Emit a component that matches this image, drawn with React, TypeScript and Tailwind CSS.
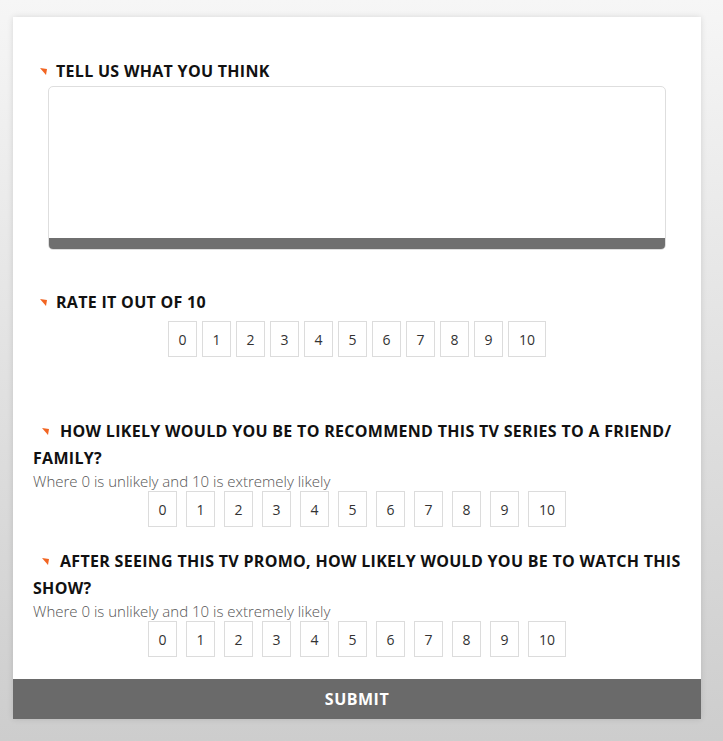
import React, { useState } from 'react';

const Marker: React.FC = () => (
    <svg width="7" height="7" viewBox="0 0 7 7" className="inline-block align-middle mr-[9px] -mt-[3px]">
        <polygon points="0,0 7,1 6,7" fill="#f26522" />
    </svg>
);

const ScaleRow: React.FC<{ gap: string; value: number | null; onPick: (n: number) => void }> = ({ gap, value, onPick }) => {
    const nums = [0, 1, 2, 3, 4, 5, 6, 7, 8, 9, 10];
    return (
        <div className={`flex justify-center ${gap}`}>
            {nums.map(n => (
                <button
                    key={n}
                    onClick={() => onPick(n)}
                    className={`h-[36px] ${n === 10 ? 'w-[38px]' : 'w-[29px]'} border border-[#dcdcdc] flex items-center justify-center text-[14px] text-[#333] ${value === n ? 'bg-[#eee]' : 'bg-white'}`}
                >
                    {n}
                </button>
            ))}
        </div>
    );
};

export default function App() {
    const [rate, setRate] = useState<number | null>(null);
    const [recommend, setRecommend] = useState<number | null>(null);
    const [watch, setWatch] = useState<number | null>(null);

    const heading = "text-[16px] font-bold uppercase text-[#111] leading-[27px] tracking-[0.3px]";
    const hint = "text-[15px] font-light text-[#555] leading-[19px]";

    return (
        <div
            className="min-h-[741px] w-full bg-gradient-to-b from-[#f6f6f6] to-[#cdcdcd] pt-[17px] pb-[21px]"
            style={{ fontFamily: '"Open Sans", "Liberation Sans", sans-serif' }}
        >
            <div className="ml-[13px] w-[688px] bg-white shadow-[0_0_6px_rgba(0,0,0,0.12)]">
                <div className="pl-[20px] pr-[8px] pt-[41px] pb-[22px]">
                    {/* Tell us what you think */}
                    <div className={`${heading} pl-[7px]`}>
                        <Marker />
                        Tell us what you think
                    </div>
                    <div className="ml-[15px] mr-[27px] mt-[1px] rounded-[5px] border border-[#dedede] overflow-hidden">
                        <textarea className="block w-full h-[151px] resize-none outline-none p-2 text-[14px]" />
                        <div className="h-[11px] bg-[#6f6f6f]" />
                    </div>

                    {/* Rate it out of 10 */}
                    <div className={`${heading} pl-[7px] mt-[39px]`}>
                        <Marker />
                        Rate it out of 10
                    </div>
                    <div className="mt-[5px] pr-[12px]">
                        <ScaleRow gap="gap-[5px]" value={rate} onPick={setRate} />
                    </div>

                    {/* Recommend */}
                    <div className={`${heading} mt-[61px]`}>
                        <span className="pl-[9px]" />
                        <Marker />
                        <span className="ml-[2px]">How likely would you be to recommend this TV series to a friend/ family?</span>
                    </div>
                    <div className={hint}>Where 0 is unlikely and 10 is extremely likely</div>
                    <div className="pr-[12px]">
                        <ScaleRow gap="gap-[9px]" value={recommend} onPick={setRecommend} />
                    </div>

                    {/* Watch */}
                    <div className={`${heading} mt-[21px]`}>
                        <span className="pl-[9px]" />
                        <Marker />
                        <span className="ml-[2px]">After seeing this TV promo, how likely would you be to watch this show?</span>
                    </div>
                    <div className={hint}>Where 0 is unlikely and 10 is extremely likely</div>
                    <div className="pr-[12px]">
                        <ScaleRow gap="gap-[9px]" value={watch} onPick={setWatch} />
                    </div>
                </div>
                <button className="w-full h-[40px] bg-[#6a6a6a] text-white text-[16px] font-bold uppercase tracking-[0.5px] flex items-center justify-center">
                    Submit
                </button>
            </div>
        </div>
    );
}
